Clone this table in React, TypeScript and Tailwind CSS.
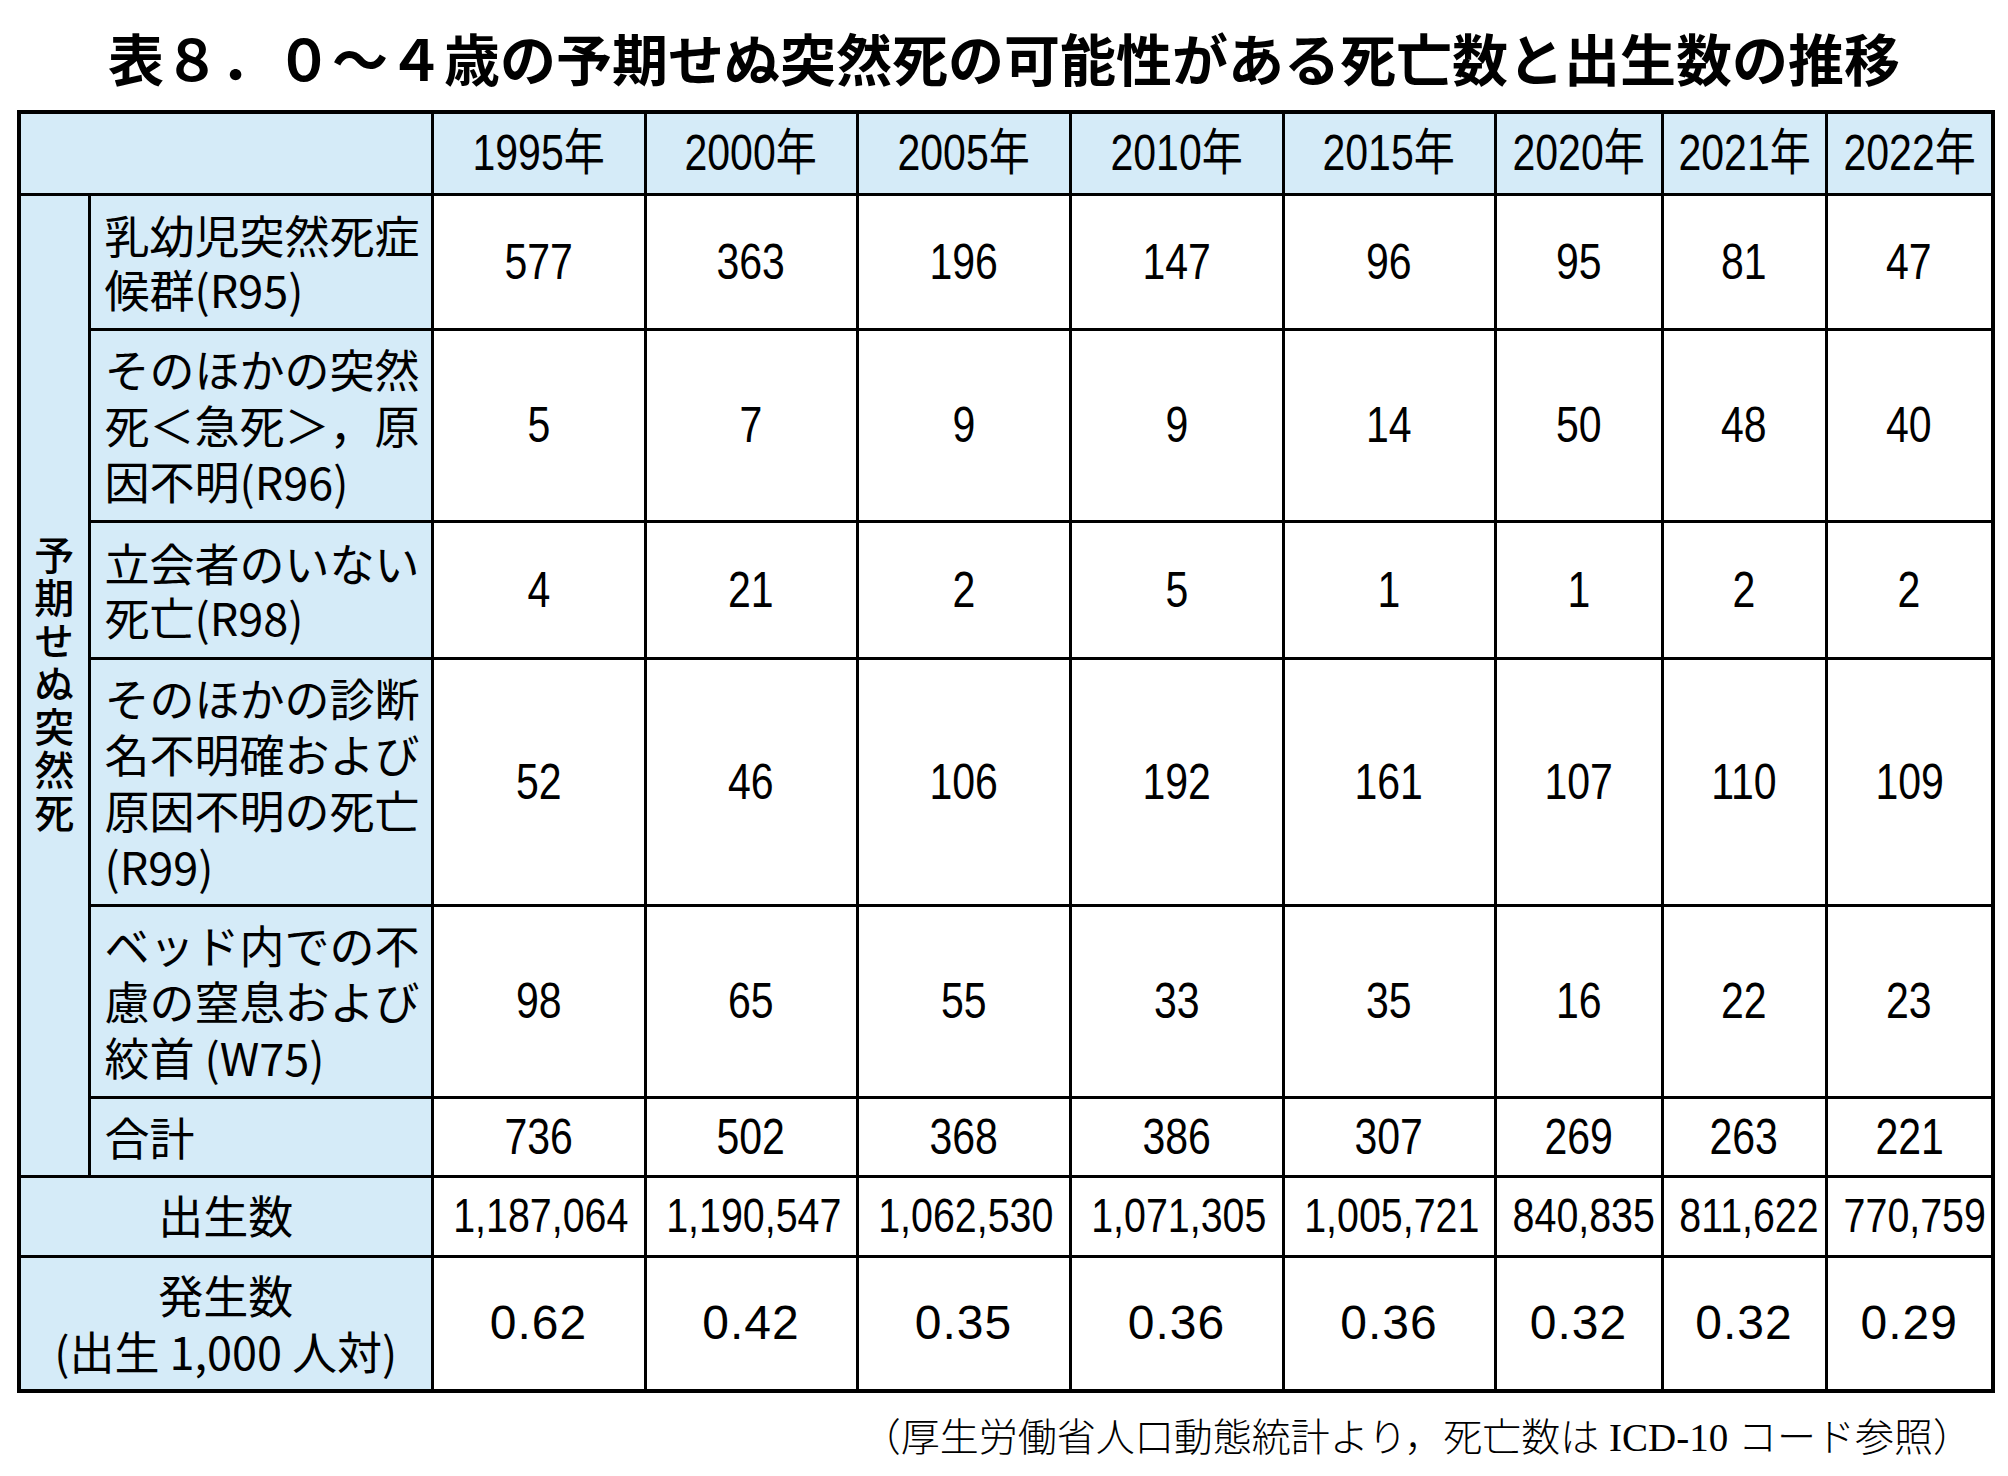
import React from 'react';

const years = ['1995', '2000', '2005', '2010', '2015', '2020', '2021', '2022'];

const deathRows = [
    { label: ['乳幼児突然死症', '候群(R95)'], h: 'h-[135px]', lh: 'leading-[54px]', values: ['577', '363', '196', '147', '96', '95', '81', '47'] },
    { label: ['そのほかの突然', '死＜急死＞，原', '因不明(R96)'], h: 'h-[192px]', lh: 'leading-[56px]', values: ['5', '7', '9', '9', '14', '50', '48', '40'] },
    { label: ['立会者のいない', '死亡(R98)'], h: 'h-[137px]', lh: 'leading-[54px]', values: ['4', '21', '2', '5', '1', '1', '2', '2'] },
    { label: ['そのほかの診断', '名不明確および', '原因不明の死亡', '(R99)'], h: 'h-[247px]', lh: 'leading-[56px]', values: ['52', '46', '106', '192', '161', '107', '110', '109'] },
    { label: ['ベッド内での不', '慮の窒息および', '絞首 (W75)'], h: 'h-[192px]', lh: 'leading-[56px]', values: ['98', '65', '55', '33', '35', '16', '22', '23'] },
];

const totals = ['736', '502', '368', '386', '307', '269', '263', '221'];
const births = ['1,187,064', '1,190,547', '1,062,530', '1,071,305', '1,005,721', '840,835', '811,622', '770,759'];
const rates = ['0.62', '0.42', '0.35', '0.36', '0.36', '0.32', '0.32', '0.29'];

const jp = "font-['Noto_Sans_CJK_JP',sans-serif]";
const num = "font-['Liberation_Sans','Noto_Sans_CJK_JP',sans-serif]";
const cell = 'border-[3px] border-black';
const blue = 'bg-[#d5ebf8]';

function Num({ children, size = 'text-[50px]' }: { children: React.ReactNode; size?: string }) {
    return (
        <span className={`inline-block scale-x-[0.82] leading-none whitespace-nowrap ${size} ${num}`}>
            {children}
        </span>
    );
}

export default function App() {
    return (
        <div className="w-[2008px] h-[1476px] bg-white px-[17px] text-black">
            {/* Title */}
            <div className="h-[110px] flex items-center justify-center pt-[4px]">
                <h1 className={`text-[56px] font-bold leading-none whitespace-nowrap ${jp}`}>
                    表８．０～４歳の予期せぬ突然死の可能性がある死亡数と出生数の推移
                </h1>
            </div>

            <table className="w-[1974px] table-fixed border-collapse border-4 border-black">
                <colgroup>
                    <col className="w-[70px]" />
                    <col className="w-[343px]" />
                    <col className="w-[213px]" />
                    <col className="w-[212px]" />
                    <col className="w-[213px]" />
                    <col className="w-[213px]" />
                    <col className="w-[212px]" />
                    <col className="w-[167px]" />
                    <col className="w-[164px]" />
                    <col className="w-[167px]" />
                </colgroup>
                <tbody>
                    {/* Header */}
                    <tr className="h-[82px]">
                        <td colSpan={2} className={`${cell} ${blue}`}></td>
                        {years.map(y => (
                            <td key={y} className={`${cell} ${blue} text-center align-middle`}>
                                <Num>{y}年</Num>
                            </td>
                        ))}
                    </tr>

                    {deathRows.map((row, i) => (
                        <tr key={i} className={row.h}>
                            {i === 0 && (
                                <td rowSpan={6} className={`${cell} ${blue} align-middle`}>
                                    <div className="flex justify-center">
                                        <span className={`[writing-mode:vertical-rl] text-[40px] leading-none tracking-[3px] font-medium ${jp}`}>
                                            予期せぬ突然死
                                        </span>
                                    </div>
                                </td>
                            )}
                            <td className={`${cell} ${blue} pl-[14px] align-middle`}>
                                <div className={`text-[45px] ${row.lh} whitespace-nowrap ${jp}`}>
                                    {row.label.map((l, k) => (
                                        <div key={k}>{l}</div>
                                    ))}
                                </div>
                            </td>
                            {row.values.map((v, k) => (
                                <td key={k} className={`${cell} bg-white text-center align-middle`}>
                                    <Num>{v}</Num>
                                </td>
                            ))}
                        </tr>
                    ))}

                    {/* Total */}
                    <tr className="h-[79px]">
                        <td className={`${cell} ${blue} pl-[14px] align-middle`}>
                            <div className={`text-[45px] leading-[56px] ${jp}`}>合計</div>
                        </td>
                        {totals.map((v, k) => (
                            <td key={k} className={`${cell} bg-white text-center align-middle`}>
                                <Num>{v}</Num>
                            </td>
                        ))}
                    </tr>

                    {/* Births */}
                    <tr className="h-[80px]">
                        <td colSpan={2} className={`${cell} ${blue} text-center align-middle`}>
                            <span className={`text-[45px] leading-none ${jp}`}>出生数</span>
                        </td>
                        {births.map((v, k) => (
                            <td key={k} className={`${cell} bg-white text-center align-middle`}>
                                <Num size="text-[48px]">{v}</Num>
                            </td>
                        ))}
                    </tr>

                    {/* Rate */}
                    <tr className="h-[135px]">
                        <td colSpan={2} className={`${cell} ${blue} text-center align-middle`}>
                            <div className={`text-[45px] leading-[56px] ${jp}`}>
                                <div>発生数</div>
                                <div className="whitespace-nowrap">(出生 1,000 人対)</div>
                            </div>
                        </td>
                        {rates.map((v, k) => (
                            <td key={k} className={`${cell} bg-white text-center align-middle`}>
                                <span className={`text-[48px] leading-none tracking-[1px] ${num}`}>{v}</span>
                            </td>
                        ))}
                    </tr>
                </tbody>
            </table>

            {/* Source note */}
            <div className={`mt-[22px] pr-[19px] text-right text-[39px] leading-[45px] font-['Liberation_Serif','Noto_Sans_CJK_JP',serif] font-light`}>
                （厚生労働省人口動態統計より，死亡数は ICD-10 コード参照）
            </div>
        </div>
    );
}
